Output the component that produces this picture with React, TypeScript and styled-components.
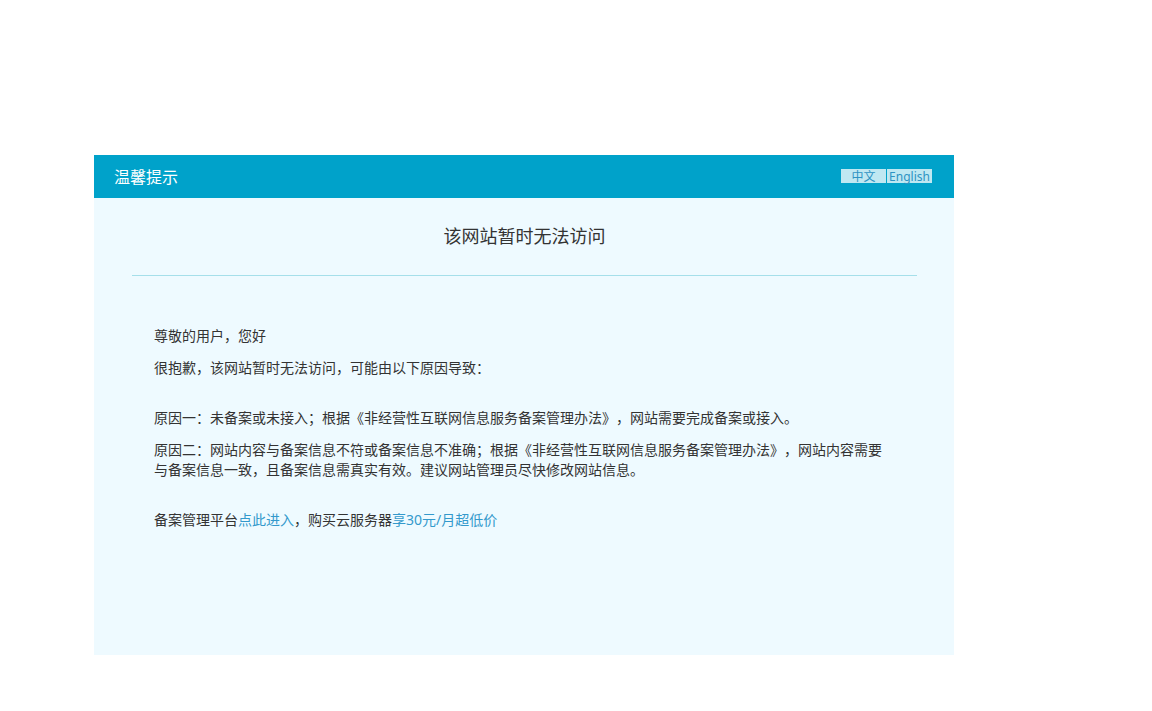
import styled, { createGlobalStyle } from "styled-components";

const GlobalStyle = createGlobalStyle`
body {
    margin: 0;
    background-color: #fff;
    color: #333;
    font-family: "Noto Sans", "Noto Sans CJK SC", sans-serif;
    font-size: 14px;
    line-height: 20px;
    text-spacing-trim: space-all;
}
`

const Page = styled.div`
box-sizing: border-box;
padding: 155px 104px 56px 0;
`

const Card = styled.main`
max-width: 860px;
min-height: 500px;
margin: 0 auto;
background-color: #eefaff;
`

const Header = styled.header`
display: flex;
align-items: center;
justify-content: space-between;
padding: 0 22px 0 20px;
height: 43px;
background-color: #00a2ca;
`

const HeaderTitle = styled.h2`
margin: 0;
color: #fff;
font-size: 16px;
font-weight: 400;
line-height: 24px;
`

const Languages = styled.nav`
display: flex;
gap: 1px;
padding-bottom: 1px;
`

const LanguageLink = styled.a`
width: 45px;
height: 14px;
background-color: #bfe8f2;
color: #2e93c3;
font-size: 12px;
line-height: 16px;
text-align: center;
text-decoration: none;
`

const Title = styled.h1`
margin: 0 37px 0 38px;
padding: 26px 0;
border-bottom: 1px solid #a5dfea;
font-size: 18px;
font-weight: 400;
line-height: 25px;
text-align: center;
`

const Content = styled.div`
padding: 50px 60px;
`

const Paragraph = styled.p<{ $last?: boolean }>`
margin: 0 0 ${(props) => (props.$last ? 30 : 12)}px;
`

const TextLink = styled.a`
color: #3399cc;
text-decoration: none;
`

const languages = [
    { code: "zh", name: "中文" },
    { code: "en", name: "English" },
];

export default function App() {
    return (
        <>
            <GlobalStyle />
            <Page lang="zh-CN">
                <Card>
                    <Header>
                        <HeaderTitle>温馨提示</HeaderTitle>
                        <Languages>
                            {languages.map((language) => (
                                <LanguageLink key={language.code} href={`#${language.code}`}>
                                    {language.name}
                                </LanguageLink>
                            ))}
                        </Languages>
                    </Header>
                    <Title>该网站暂时无法访问</Title>
                    <Content>
                        <Paragraph>尊敬的用户，您好</Paragraph>
                        <Paragraph $last>很抱歉，该网站暂时无法访问，可能由以下原因导致：</Paragraph>
                        <Paragraph>
                            原因一：未备案或未接入；根据《非经营性互联网信息服务备案管理办法》，网站需要完成备案或接入。
                        </Paragraph>
                        <Paragraph $last>
                            原因二：网站内容与备案信息不符或备案信息不准确；根据《非经营性互联网信息服务备案管理办法》，网站内容需要与备案信息一致，且备案信息需真实有效。建议网站管理员尽快修改网站信息。
                        </Paragraph>
                        <Paragraph>
                            备案管理平台<TextLink href="#beian">点此进入</TextLink>，购买云服务器
                            <TextLink href="#cloud">享30元/月超低价</TextLink>
                        </Paragraph>
                    </Content>
                </Card>
            </Page>
        </>
    )
}
